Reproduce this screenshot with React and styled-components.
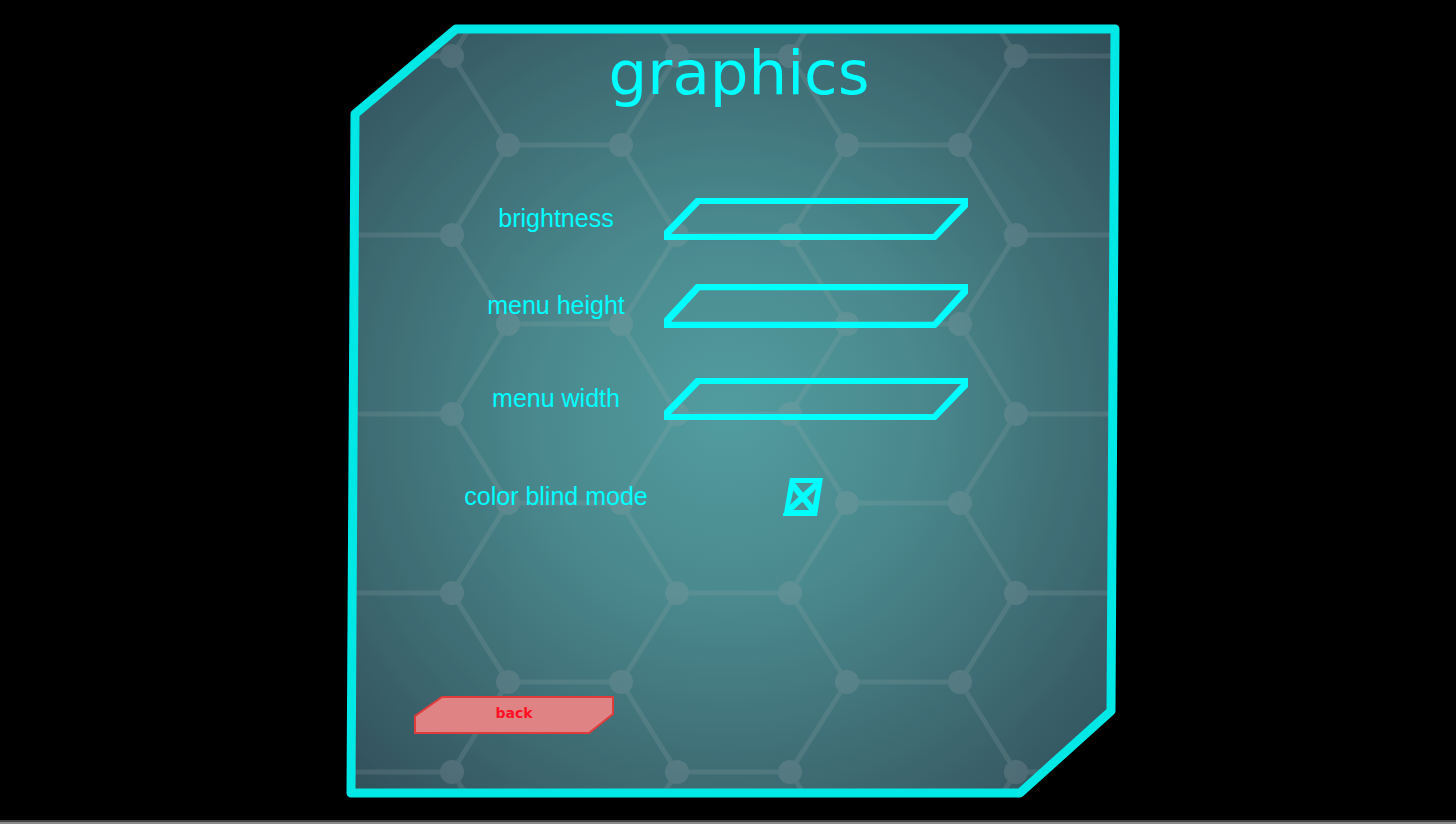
import { useState } from "react";
import styled, { createGlobalStyle } from "styled-components";

const colors = {
    cyan: "#00ffff",
    frame: "#00e8e6",
    red: "#ff0f23",
    redBorder: "#e03c3c",
    redFill: "#e08385",
}

const GlobalStyle = createGlobalStyle`
    * {
        box-sizing: border-box;
    }
    body {
        margin: 0;
        background-color: #000;
        font-family: "DejaVu Sans", sans-serif;
    }
`
const Page = styled.main`
    display: grid;
    grid-template-columns: 346fr 774fr 336fr;
    min-height: 100vh;
    padding: 24px 0;
    border-bottom: 2px solid #8a8a8a;
    box-shadow: inset 0 -2px 0 #444;
`
const Panel = styled.section`
    grid-column: 2;
    position: relative;
    display: flex;
    flex-direction: column;
`
const Backdrop = styled.svg`
    position: absolute;
    inset: 0;
    width: 100%;
    height: 100%;
    z-index: -1;
`
const Title = styled.h1`
    margin: 14px 0 0;
    padding-left: 12px;
    font-size: 61px;
    font-weight: 400;
    line-height: 70px;
    color: ${colors.cyan};
    text-align: center;
`
const Form = styled.form`
    display: flex;
    flex: 1;
    flex-direction: column;
    padding-top: 68px;
`
const Row = styled.div`
    display: grid;
    grid-template-columns: 200px 1fr;
    column-gap: 8px;
    align-items: center;
    height: ${({ $height }) => $height}px;
    padding: 0 152px 0 110px;
`
const Label = styled.label`
    padding-bottom: 2px;
    font-family: "Liberation Sans", Arial, sans-serif;
    font-size: 25px;
    line-height: 30px;
    color: ${colors.cyan};
    text-align: center;
    white-space: nowrap;
`
const Stack = styled.div`
    display: grid;
    width: ${({ $width }) => $width || "100%"};
    height: ${({ $height }) => $height}px;

    > * {
        grid-area: 1 / 1;
        width: 100%;
        height: 100%;
        min-width: 0;
        min-height: 0;
    }
`
const Shape = styled.svg`
    display: block;
    pointer-events: none;
`
const Range = styled.input`
    margin: 0;
    appearance: none;
    background: transparent;
    cursor: pointer;

    &::-webkit-slider-thumb {
        appearance: none;
        width: 12px;
        height: 30px;
        background: transparent;
    }
`
const CheckCell = styled.div`
    display: flex;
    justify-content: center;
    padding-right: 26px;
`
const Checkbox = styled.input`
    margin: 0;
    appearance: none;
    cursor: pointer;
`
const Footer = styled.footer`
    display: flex;
    margin-top: auto;
    padding: 0 68px 64px;
`
const BackButton = styled.button`
    display: grid;
    width: 200px;
    height: 38px;
    padding: 0;
    border: none;
    background: transparent;
    cursor: pointer;

    > * {
        grid-area: 1 / 1;
    }
`
const BackText = styled.span`
    align-self: center;
    padding-bottom: 4px;
    font-family: "DejaVu Sans", sans-serif;
    font-size: 14px;
    font-weight: 700;
    line-height: 16px;
    color: ${colors.red};
    text-align: center;
`

const outline = "456,29 1115,29 1111,711 1020,793 351,793 355,114"

// even rows use the outer columns of the lattice, odd rows the inner ones
const evenX = [339, 452, 677, 790, 1016, 1129]
const oddX = [283, 508, 621, 847, 960, 1185]
const rowsY = [-34, 56, 145, 235, 324, 414, 503, 593, 682, 772, 861]

const lattice = rowsY.map((y, i) => {
    const even = i % 2 === 1
    const xs = even ? evenX : oddX
    const next = even ? oddX : evenX
    const pairs = even ? [[0, 1], [2, 3], [4, 5]] : [[1, 2], [3, 4]]
    const lines = pairs.map(([a, b]) => `M${xs[a]} ${y}H${xs[b]}`)
    if (i < rowsY.length - 1) {
        xs.forEach((x, n) => lines.push(`M${x} ${y}L${next[n]} ${rowsY[i + 1]}`))
    }
    return { y, xs, d: lines.join("") }
})

const PanelBackdrop = () => (
    <Backdrop viewBox="346 24 774 774" preserveAspectRatio="none" aria-hidden="true">
        <defs>
            <radialGradient id="glow" gradientUnits="userSpaceOnUse" cx="728" cy="412" r="540">
                <stop offset="0" stopColor="#529c9f" />
                <stop offset="0.35" stopColor="#4a898e" />
                <stop offset="0.7" stopColor="#3e6a72" />
                <stop offset="1" stopColor="#324f59" />
            </radialGradient>
            <clipPath id="inside">
                <polygon points={outline} />
            </clipPath>
        </defs>
        <polygon points={outline} fill="url(#glow)" />
        <g clipPath="url(#inside)">
            <g opacity="0.22">
                {lattice.map(({ y, xs, d }) => (
                    <g key={y}>
                        <path d={d} stroke="#a0aeb0" strokeOpacity="0.8" strokeWidth="5" fill="none" />
                        {xs.map((x) => <circle key={x} cx={x} cy={y} r="12" fill="#a4aab0" />)}
                    </g>
                ))}
            </g>
        </g>
        <polygon points={outline} fill="none" stroke={colors.frame} strokeWidth="9" strokeLinejoin="round" />
    </Backdrop>
)

const Slider = ({ id, height = 42 }) => {
    const [value, setValue] = useState(50)

    return (
        <Stack $height={height}>
            <Range id={id} type="range" value={value} onChange={(e) => setValue(e.target.value)} />
            <Shape viewBox="0 0 304 42" preserveAspectRatio="none" aria-hidden="true">
                <path
                    d="M32 0H304V9L272 42H0V33ZM36 6L7 36H269L297 6Z"
                    fill={colors.cyan}
                    fillRule="evenodd"
                />
            </Shape>
        </Stack>
    )
}

const App = () => {
    const [colorBlind, setColorBlind] = useState(true)

    return (
        <>
        <GlobalStyle />
        <Page>
            <Panel>
                <PanelBackdrop />
                <Title>graphics</Title>
                <Form>
                    <Row $height={86}>
                        <Label htmlFor="brightness">brightness</Label>
                        <Slider id="brightness" />
                    </Row>
                    <Row $height={88}>
                        <Label htmlFor="menu-height">menu height</Label>
                        <Slider id="menu-height" height={44} />
                    </Row>
                    <Row $height={98}>
                        <Label htmlFor="menu-width">menu width</Label>
                        <Slider id="menu-width" />
                    </Row>
                    <Row $height={98}>
                        <Label htmlFor="color-blind">color blind mode</Label>
                        <CheckCell>
                            <Stack $width="40px" $height={38}>
                                <Checkbox
                                    id="color-blind"
                                    type="checkbox"
                                    checked={colorBlind}
                                    onChange={(e) => setColorBlind(e.target.checked)}
                                />
                                <Shape viewBox="0 0 40 38" aria-hidden="true">
                                    <path
                                        d="M7 0H40L34 38H0V35H1ZM12 5L6 32H29L34 5Z"
                                        fill={colors.cyan}
                                        fillRule="evenodd"
                                    />
                                    {colorBlind && (
                                        <path d="M9 6L30 32M34 6L6 32" stroke={colors.cyan} strokeWidth="6" />
                                    )}
                                </Shape>
                            </Stack>
                        </CheckCell>
                    </Row>
                    <Footer>
                        <BackButton type="button">
                            <Shape width="200" height="38" viewBox="0 0 200 38" aria-hidden="true">
                                <path
                                    d="M28 1H199V18L175 37H1V20Z"
                                    fill={colors.redFill}
                                    stroke={colors.redBorder}
                                    strokeWidth="2"
                                />
                            </Shape>
                            <BackText>back</BackText>
                        </BackButton>
                    </Footer>
                </Form>
            </Panel>
        </Page>
        </>
    )
}

export default App;
